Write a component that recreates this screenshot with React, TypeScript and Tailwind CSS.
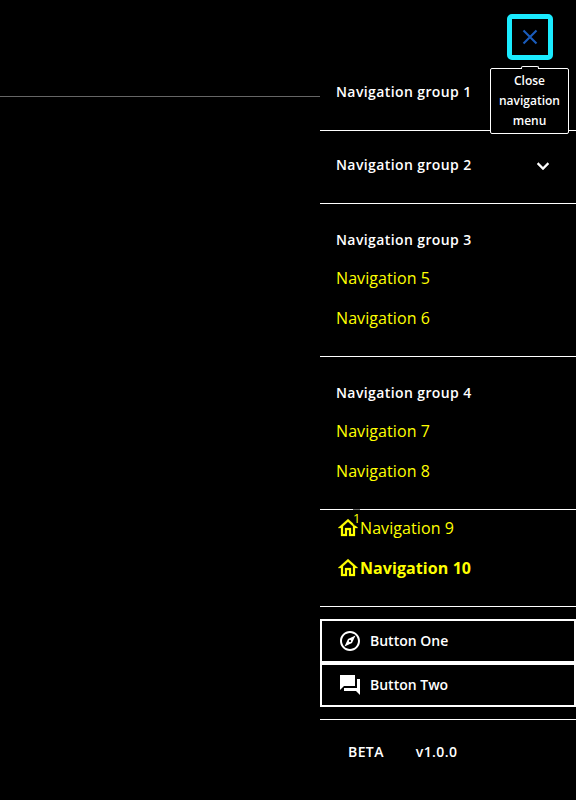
import type { ReactNode } from "react";

const HOME =
  "m12 5.69 5 4.5V18h-2v-6H9v6H7v-7.81l5-4.5M12 3 2 12h3v8h6v-6h2v6h6v-8h3L12 3z";
const EXPLORE =
  "M12 2C6.48 2 2 6.48 2 12s4.48 10 10 10 10-4.48 10-10S17.52 2 12 2zm0 18c-4.41 0-8-3.59-8-8s3.59-8 8-8 8 3.59 8 8-3.59 8-8 8zm-5.5-2.5 7.51-3.49L17.5 6.5 9.99 9.99 6.5 17.5zm5.5-6.6c.61 0 1.1.49 1.1 1.1s-.49 1.1-1.1 1.1-1.1-.49-1.1-1.1.49-1.1 1.1-1.1z";
const QUESTION_ANSWER = "M22 6h-3v9H6v3h12l4 4V6zM17 13V2H2v15l4-4h11z";
const CHEVRON = "M7.41 8.59 12 13.17l4.59-4.58L18 10l-6 6-6-6 1.41-1.41z";

function Icon({ path, className = "" }: { path: string; className?: string }) {
  return (
    <svg viewBox="0 0 24 24" fill="currentColor" className={`size-6 shrink-0 ${className}`}>
      <path d={path} />
    </svg>
  );
}

function GroupTitle({ children }: { children: ReactNode }) {
  return (
    <h2 className="flex h-9 items-center text-sm font-semibold tracking-[0.4px]">{children}</h2>
  );
}

function NavLink({ children, active = false }: { children: ReactNode; active?: boolean }) {
  return (
    <a
      href="#"
      className={`flex h-10 items-center text-base tracking-[0.08px] text-[#ffff00] ${active ? "font-bold" : ""}`}
    >
      {children}
    </a>
  );
}

function MenuButton({ path, label }: { path: string; label: string }) {
  return (
    <button className="flex h-11 w-full items-center gap-2 border-2 border-white px-4 text-sm font-semibold">
      <Icon path={path} />
      {label}
    </button>
  );
}

export default function App() {
  return (
    <div className="flex h-[800px] w-[576px] overflow-hidden bg-black font-['Open_Sans',sans-serif] text-white">
      <main className="w-80">
        <div className="h-[97px] border-b border-[#666666]" />
      </main>

      <aside className="flex w-64 flex-col">
        <header className="flex h-[74px] justify-end pt-3.5 pr-[23px]">
          <div className="relative size-[46px]">
            <button
              aria-label="Close navigation menu"
              className="flex size-[46px] items-center justify-center rounded-[5px] border-[5px] border-[#1aebff] text-[#1a5cbc]"
            >
              <svg viewBox="0 0 24 24" className="size-6" fill="none" stroke="currentColor" strokeWidth="2.1">
                <path d="M5.5 5.5 18.5 18.5M18.5 5.5 5.5 18.5" />
              </svg>
            </button>
            <div className="absolute top-[54px] left-[-17px] z-10 w-[79px] rounded-[2px] border border-white bg-black py-[2px] text-center text-xs leading-5 font-semibold">
              <span className="absolute top-[-3px] left-[30px] h-[3px] w-[18px] rounded-t-[2px] border border-b-0 border-white bg-black" />
              Close navigation menu
            </div>
          </div>
        </header>

        <section className="h-[57px] border-b border-white px-4">
          <GroupTitle>Navigation group 1</GroupTitle>
        </section>

        <section className="h-[73px] border-b border-white pt-4 pr-[21px] pl-4">
          <div className="flex items-center justify-between">
            <GroupTitle>Navigation group 2</GroupTitle>
            <Icon path={CHEVRON} className="mt-px stroke-current stroke-[0.4]" />
          </div>
        </section>

        <section className="h-[153px] border-b border-white px-4 pt-[18px]">
          <GroupTitle>Navigation group 3</GroupTitle>
          <NavLink>Navigation 5</NavLink>
          <NavLink>Navigation 6</NavLink>
        </section>

        <section className="h-[153px] border-b border-white px-4 pt-[18px]">
          <GroupTitle>Navigation group 4</GroupTitle>
          <NavLink>Navigation 7</NavLink>
          <NavLink>Navigation 8</NavLink>
        </section>

        <section className="h-[97px] border-b border-white px-4">
          <div className="-mt-0.5">
            <NavLink>
              <span className="relative">
                <Icon path={HOME} className="stroke-current stroke-[0.25]" />
                <span className="absolute -top-[7px] left-[17px] h-[17px] w-[7px] rounded-b-full bg-black/60 text-[13px] leading-[18px] font-medium">
                  1
                </span>
              </span>
              Navigation 9
            </NavLink>
            <NavLink active>
              <Icon path={HOME} className="stroke-current stroke-[0.25]" />
              Navigation 10
            </NavLink>
          </div>
        </section>

        <section className="h-[113px] border-b border-white py-3">
          <MenuButton path={EXPLORE} label="Button One" />
          <MenuButton path={QUESTION_ANSWER} label="Button Two" />
        </section>

        <footer className="flex gap-8 px-7 pt-[22px] text-sm leading-5 font-semibold">
          <span className="tracking-[0.4px]">BETA</span>
          <span className="tracking-[0.4px]">v1.0.0</span>
        </footer>
      </aside>
    </div>
  );
}
